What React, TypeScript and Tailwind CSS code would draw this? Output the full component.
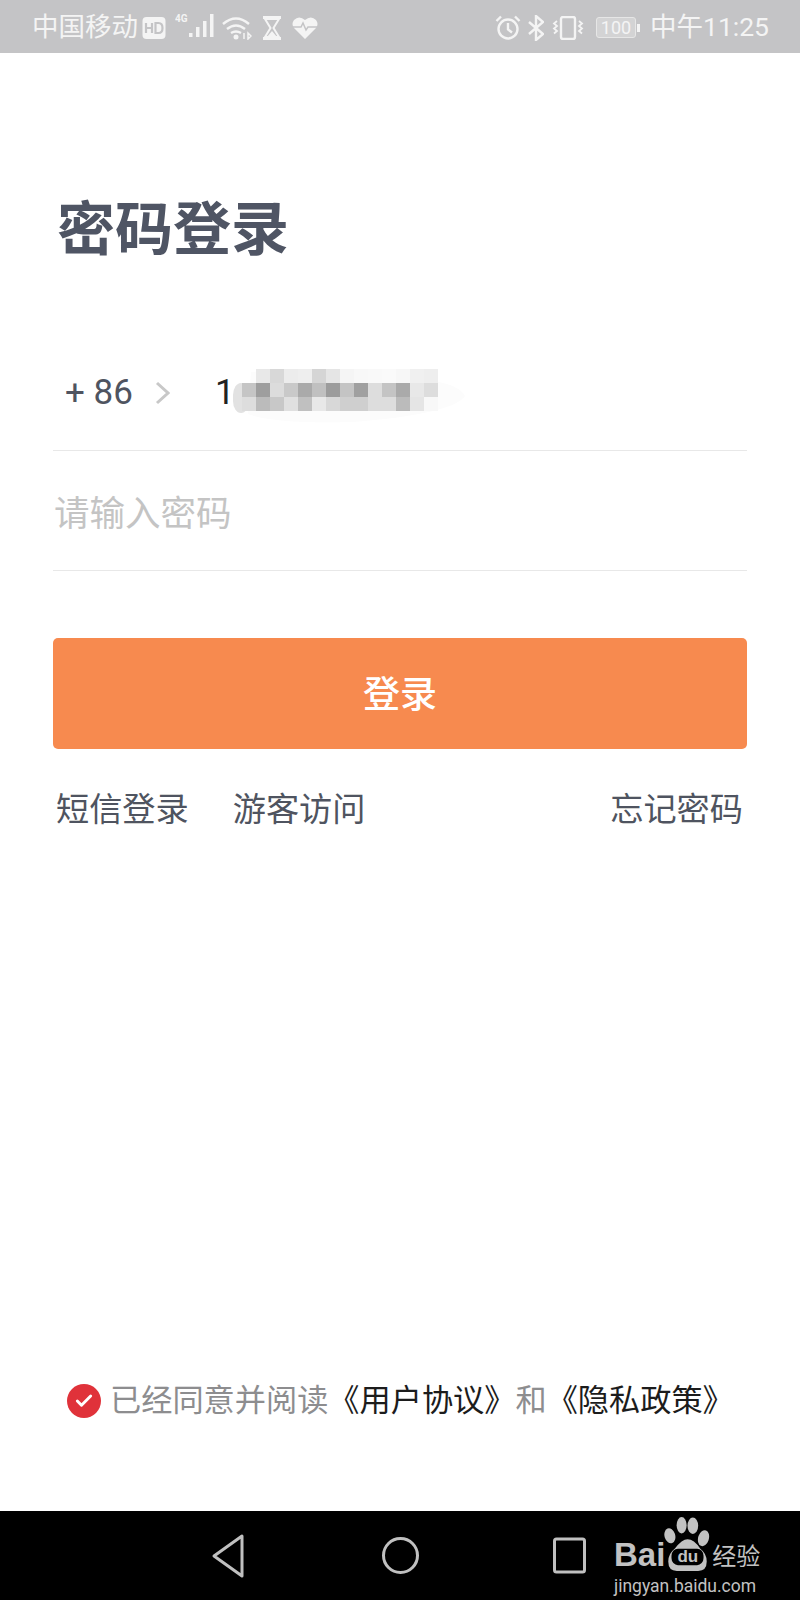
import { Check } from "lucide-react";

const cjk = "font-['Roboto','Noto_Sans_CJK_SC',sans-serif]";

const mosaic: string[][] = [
  ["", "#e8e8e8", "#d8d8d8", "#ececec", "#eeeeee", "#d5d5d5", "#e5e5e5", "#f5f5f5", "#f8f8f8", "#f9f9f9", "#fafafa", "#f7f7f7", "#f0f0f0", "#eeeeee"],
  ["#c5c5c5", "#9e9e9e", "#dcdcdc", "#c9c9c9", "#aaaaaa", "#c0c0c0", "#9c9c9c", "#c4c4c4", "#a0a0a0", "#dddddd", "#c4c4c4", "#aaaaaa", "#e8e8e8", "#dddddd"],
  ["#dddddd", "#bbbbbb", "#c8c8c8", "#e0e0e0", "#c0c0c0", "#e8e8e8", "#d8d8d8", "#cfcfcf", "#cfcfcf", "#dddddd", "#dddddd", "#bbbbbb", "#e5e5e5", "#f8f8f8"],
];

const StatusBar = () => (
  <div className={`flex h-[53px] items-center justify-between bg-[#c4c4c6] pl-[32px] pr-[31px] pt-[2px] text-[#f4f4f4] ${cjk}`}>
    <div className="flex items-center">
      <span className="text-[26.5px] leading-none">中国移动</span>
      <svg width="24" height="22" viewBox="0 0 24 22" className="ml-[4px]">
        <rect x="0.5" y="0" width="23" height="22" rx="4" fill="#f4f4f4" />
        <path d="M4 6v10M10 6v10M4 11h6" stroke="#c4c4c6" strokeWidth="2.200" fill="none" />
        <path d="M13.500 6h3q4 0 4 5t-4 5h-3z" stroke="#c4c4c6" strokeWidth="2.200" fill="none" />
      </svg>
      <svg width="40" height="26" viewBox="0 0 40 26" className="ml-[9px] -translate-y-[2px]" fill="#f4f4f4">
        <text x="0" y="9" fontSize="10" fontWeight="700" fontFamily="Roboto">4G</text>
        <rect x="14" y="20" width="3.500" height="4" />
        <rect x="21" y="14" width="3.500" height="10" />
        <rect x="28" y="8" width="3.500" height="16" />
        <rect x="35" y="1" width="3.500" height="23" />
      </svg>
      <svg width="30" height="24" viewBox="0 0 30 24" className="ml-[7px]" fill="none" stroke="#f4f4f4" strokeWidth="2.400">
        <path d="M1 8q13-11 26 0M5 13q9-7 18 0M9 17q5-3 10 0" />
        <circle cx="14" cy="21" r="2.500" fill="#f4f4f4" stroke="none" />
        <path d="M22 17v6M26 17l3 3-3 3z" strokeWidth="1.500" />
      </svg>
      <svg width="20" height="24" viewBox="0 0 20 24" className="ml-[10px]" fill="#f4f4f4">
        <rect x="1" y="0" width="18" height="3" />
        <rect x="1" y="21" width="18" height="3" />
        <path d="M3 3h14l-5.500 9 5.500 9h-14l5.500-9z" fill="none" stroke="#f4f4f4" strokeWidth="2" />
        <path d="M10 15l5 6h-10z" />
      </svg>
      <svg width="26" height="24" viewBox="0 0 26 24" className="ml-[10px]">
        <path d="M13 23L2 12Q-1 8 2 4q5-5 11 0q6-5 11 0q3 4 0 8z" fill="#f4f4f4" />
        <path d="M1 11h8l2-4 3 7 2-3h9" fill="none" stroke="#c4c4c6" strokeWidth="1.500" />
      </svg>
    </div>
    <div className="flex items-center">
      <svg width="26" height="26" viewBox="0 0 26 26" fill="none" stroke="#f4f4f4" strokeWidth="2.400">
        <circle cx="13" cy="14" r="9.500" />
        <path d="M13 8v6.500l4 3M1.500 6L6 1.500M24.500 6L20 1.500" />
      </svg>
      <svg width="16" height="26" viewBox="0 0 16 26" className="ml-[7px]" fill="none" stroke="#f4f4f4" strokeWidth="2.400">
        <path d="M1 7l14 12-7 6V1l7 6L1 19" />
      </svg>
      <svg width="32" height="24" viewBox="0 0 32 24" className="ml-[8px]" fill="none" stroke="#f4f4f4" strokeWidth="2.400">
        <rect x="9" y="1" width="14" height="22" rx="2" />
        <path d="M5 5l-3 2.500 3 2.500-3 2.500 3 2.500-3 2.500M27 5l3 2.500-3 2.500 3 2.500-3 2.500 3 2.500" strokeWidth="1.800" />
      </svg>
      <div className="ml-[12px] flex h-[21px] w-[40px] items-center justify-center rounded-[3px] border border-[#e6e6e6] bg-[#d3d3d4] text-[18px] leading-none font-['Roboto']">
        100
      </div>
      <div className="ml-[1px] h-[8px] w-[3px] bg-[#f4f4f4]" />
      <span className="ml-[10px] text-[26.5px] leading-none">中午11:25</span>
    </div>
  </div>
);

const PhoneMosaic = () => (
  <svg width="240" height="62" viewBox="0 0 240 62" className="-ml-[2px] translate-y-[2px]">
    <path d="M18 8Q120 2 180 14Q225 18 232 32Q220 50 120 58Q40 60 15 50z" fill="#fcfcfc" />
    <rect x="0" y="19" width="16" height="30" rx="12" fill="#e2e2e2" />
    {mosaic.map((row, r) =>
      row.map((c, i) =>
        c ? <rect key={`${r}-${i}`} x={9 + i * 14} y={5 + r * 14} width="14" height="14" fill={c} /> : null
      )
    )}
  </svg>
);

const BaiduMark = () => (
  <div className="absolute left-[614px] top-[1517px] w-[144px] text-[#c2c2c2]">
    <div className="flex h-[54px] items-end">
      <span className="mb-[-2px] font-['Liberation_Sans'] text-[33px] leading-[36px] font-bold">Bai</span>
      <div className="relative -ml-[1px] h-[54px] w-[47px] shrink-0">
        <svg width="47" height="54" viewBox="0 0 44 46" preserveAspectRatio="none" className="block">
          <g fill="#c2c2c2">
            <ellipse cx="5.500" cy="16" rx="5" ry="6.500" transform="rotate(-20 5.500 16)" />
            <ellipse cx="16.500" cy="7" rx="4.700" ry="7" />
            <ellipse cx="27" cy="7.500" rx="5" ry="7" />
            <ellipse cx="37" cy="18" rx="5" ry="7" transform="rotate(20 37 18)" />
            <path d="M4 38q0-7 6-11q7-8 12-8q6 0 12 8q6 4 6 11q0 8-8 8H12q-8 0-8-8z" />
          </g>
          <rect x="7" y="27" width="30" height="14" rx="6" fill="#000" />
        </svg>
        <span className="absolute bottom-[6px] left-0 w-full text-center font-['Liberation_Sans'] text-[17px] leading-none font-bold">du</span>
      </div>
      <span className="mb-[1px] ml-[1px] font-['Noto_Sans_CJK_SC'] text-[24px] leading-[30px] whitespace-nowrap">经验</span>
    </div>
    <div className="mt-[4px] font-['Roboto'] text-[17.5px] leading-[22px] whitespace-nowrap">jingyan.baidu.com</div>
  </div>
);

const NavBar = () => (
  <div className="flex h-[89px] items-center bg-black pl-[212px]">
    <svg width="32" height="44" viewBox="0 0 32 44" fill="none" stroke="#c0c0c0" strokeWidth="3" strokeLinejoin="round">
      <path d="M30 2v40L2 22z" />
    </svg>
    <svg width="37" height="37" viewBox="0 0 37 37" className="ml-[138px]" fill="none" stroke="#c0c0c0" strokeWidth="3">
      <circle cx="18.500" cy="18.500" r="17" />
    </svg>
    <svg width="33" height="39" viewBox="0 0 33 39" className="ml-[134px]" fill="none" stroke="#c0c0c0" strokeWidth="3">
      <rect x="1.500" y="3" width="30" height="33" rx="2" />
    </svg>
  </div>
);

export default function App() {
  return (
    <div className={`relative flex h-[1600px] w-[800px] flex-col overflow-hidden bg-white ${cjk}`}>
      <StatusBar />
      <main className="flex flex-1 flex-col px-[53px]">
        <h1 className="mt-[142px] ml-[4px] text-[58px] leading-[70px] font-bold text-[#4f5564]">密码登录</h1>
        <div className="mt-[66px] flex h-[120px] items-center border-b border-[#e8e8e8] pt-[4px]">
          <span className="ml-[12px] w-[71px] text-[35px] leading-none whitespace-nowrap text-[#4f5460]">+ 86</span>
          <svg width="15" height="24" viewBox="0 0 15 24" className="ml-[19px]" fill="none" stroke="#c8c8c8" strokeWidth="3">
            <path d="M2 2l11 10-11 10" />
          </svg>
          <span className="ml-[45px] text-[35px] leading-none text-[#222222]">1</span>
          <PhoneMosaic />
        </div>
        <div className="flex h-[120px] items-center border-b border-[#e8e8e8] pt-[9px] pl-[1px] text-[35.5px] text-[#c4c4c4]">
          请输入密码
        </div>
        <button className="mt-[67px] h-[111px] rounded-[5px] bg-[#f78a4f] pt-[5px] text-[37px] font-medium text-white">登录</button>
        <div className="mt-[31px] flex items-center text-[33.2px] leading-[60px] text-[#4f5460]">
          <span className="ml-[3px]">短信登录</span>
          <span className="ml-[44px]">游客访问</span>
          <span className="ml-auto mr-[4px]">忘记密码</span>
        </div>
        <div className="mt-auto mb-[90px] ml-[14px] flex items-center text-[31.2px] leading-[40px] whitespace-nowrap text-[#8d8d8f]">
          <span className="flex h-[34px] w-[34px] items-center justify-center rounded-full bg-[#e0323a]">
            <Check size={20} strokeWidth={3.5} className="text-white" />
          </span>
          <span className="ml-[9px]">
            已经同意并阅读<span className="text-[#1c1c1c]">《用户协议》</span>和<span className="text-[#1c1c1c]">《隐私政策》</span>
          </span>
        </div>
      </main>
      <NavBar />
      <BaiduMark />
    </div>
  );
}
